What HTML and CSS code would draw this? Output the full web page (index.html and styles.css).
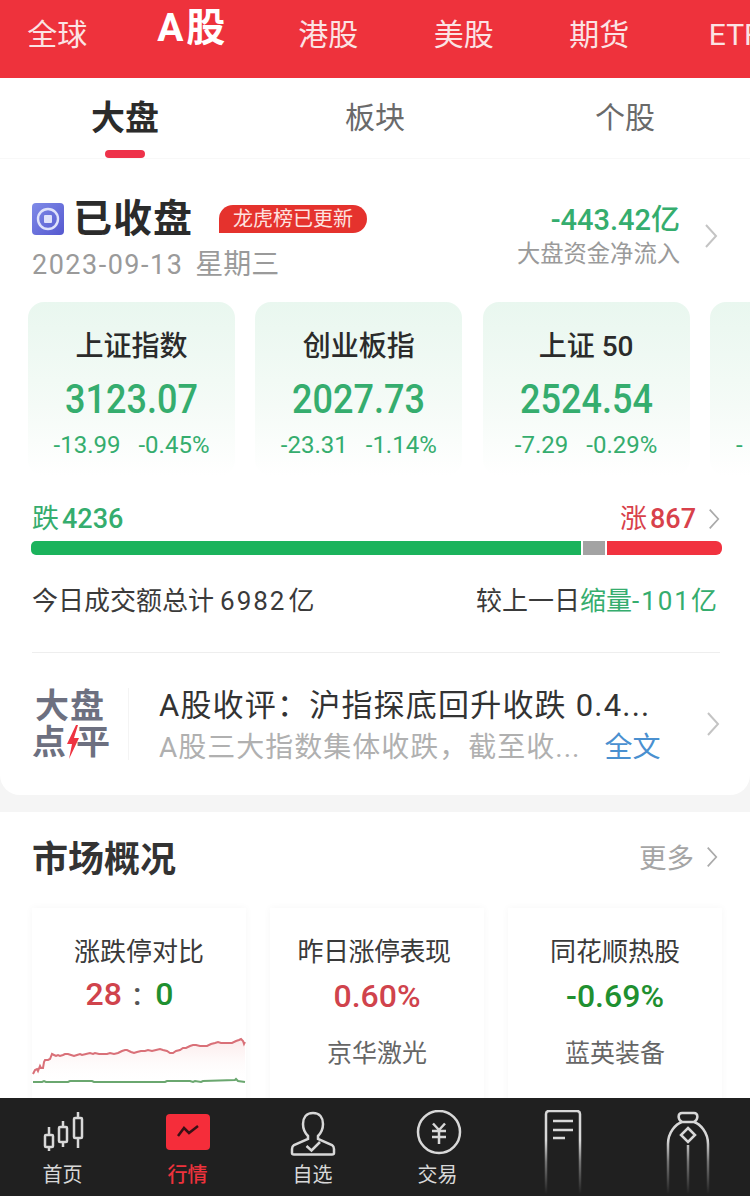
FILE: index.html
```
<!DOCTYPE html>
<html lang="zh-CN">

<head>
    <meta charset="UTF-8">
    <meta name="viewport" content="width=device-width, initial-scale=1.0">
    <title>行情</title>
    <link rel="stylesheet" href="styles.css">
</head>

<body>
    <div class="page">
        <!-- market switch -->
        <div class="market-nav">
            <div class="market-item">全球</div>
            <div class="market-item active">A股</div>
            <div class="market-item">港股</div>
            <div class="market-item">美股</div>
            <div class="market-item">期货</div>
            <div class="market-item">ETF</div>
        </div>

        <div class="content">
            <div class="sub-tabs">
                <div class="sub-tab active">大盘</div>
                <div class="sub-tab">板块</div>
                <div class="sub-tab">个股</div>
            </div>

            <div class="panel">
                <div class="status">
                    <div class="status-left">
                        <div class="status-line">
                            <svg class="status-icon" viewBox="0 0 32 32">
                                <defs>
                                    <linearGradient id="statusBg" x1="0" y1="0" x2="1" y2="1">
                                        <stop offset="0" stop-color="#7f8be8" />
                                        <stop offset="1" stop-color="#5558cf" />
                                    </linearGradient>
                                </defs>
                                <rect width="32" height="32" rx="4" fill="url(#statusBg)" />
                                <circle cx="16" cy="16" r="10" fill="none" stroke="#dfe2fb" stroke-width="2.4" />
                                <rect x="12" y="12" width="8" height="8" rx="1" fill="#dfe2fb" />
                            </svg>
                            <span class="status-title">已收盘</span>
                            <span class="status-badge">龙虎榜已更新</span>
                        </div>
                        <div class="status-date"><span class="date-num">2023-09-13</span><span>星期三</span></div>
                    </div>
                    <div class="flow">
                        <div class="flow-value">-443.42亿</div>
                        <div class="flow-label">大盘资金净流入</div>
                    </div>
                    <svg class="chevron" viewBox="0 0 14 24"><path d="M2 1 L12 12 L2 23" /></svg>
                </div>

                <div class="index-row">
                    <div class="index-card">
                        <div class="index-name">上证指数</div>
                        <div class="index-value">3123.07</div>
                        <div class="index-delta"><span>-13.99</span><span>-0.45%</span></div>
                    </div>
                    <div class="index-card">
                        <div class="index-name">创业板指</div>
                        <div class="index-value">2027.73</div>
                        <div class="index-delta"><span>-23.31</span><span>-1.14%</span></div>
                    </div>
                    <div class="index-card">
                        <div class="index-name">上证 50</div>
                        <div class="index-value">2524.54</div>
                        <div class="index-delta"><span>-7.29</span><span>-0.29%</span></div>
                    </div>
                    <div class="index-card cut">
                        <div class="index-name"></div>
                        <div class="index-value"></div>
                        <div class="index-delta"><span>-</span></div>
                    </div>
                </div>

                <div class="breadth">
                    <div class="breadth-fall">跌<b>4236</b></div>
                    <div class="breadth-rise">涨<b>867</b></div>
                    <svg class="chevron small" viewBox="0 0 14 24"><path d="M2 1 L12 12 L2 23" /></svg>
                </div>
                <div class="bar">
                    <div class="bar-fall"></div>
                    <div class="bar-flat"></div>
                    <div class="bar-rise"></div>
                </div>

                <div class="turnover">
                    <div>今日成交额总计<span class="num">6982</span>亿</div>
                    <div>较上一日<span class="green">缩量<span class="num-tight">-101</span>亿</span></div>
                </div>

                <div class="article">
                    <div class="logo">
                        <div class="logo-line top">大盘</div>
                        <div class="logo-line">点<svg class="bolt" viewBox="0 0 14 34"><path d="M10 0 L1 19 H6 L3 34 L13 13 H8 L12 0 Z" /></svg>平</div>
                    </div>
                    <div class="article-text">
                        <div class="article-title">A股收评：沪指探底回升收跌 0.4...</div>
                        <div class="article-sub"><span class="sub-text">A股三大指数集体收跌，截至收...</span><span class="more-link">全文</span></div>
                    </div>
                    <svg class="chevron" viewBox="0 0 14 24"><path d="M2 1 L12 12 L2 23" /></svg>
                </div>
            </div>

            <div class="overview">
                <div class="overview-head">
                    <div class="overview-title">市场概况</div>
                    <div class="overview-more">更多</div>
                    <svg class="chevron small" viewBox="0 0 14 24"><path d="M2 1 L12 12 L2 23" /></svg>
                </div>
                <div class="overview-cards">
                    <div class="ov-card">
                        <div class="ov-name">涨跌停对比</div>
                        <div class="ov-value ratio"><span class="red">28</span><span class="colon">:</span><span class="dgreen">0</span></div>
                        <svg class="spark" viewBox="32 1030 214 60" preserveAspectRatio="none">
                            <defs>
                                <linearGradient id="sparkFill" x1="0" y1="0" x2="0" y2="1">
                                    <stop offset="0" stop-color="#f6c9c9" stop-opacity="0.4" />
                                    <stop offset="1" stop-color="#fff" stop-opacity="0" />
                                </linearGradient>
                            </defs>
                            <path fill="url(#sparkFill)" d="M33 1073 L37 1068 L40 1065 L43 1067 L45 1059 L50 1058 L53 1053 L60 1055 L68 1053 L82 1054 L95 1052 L107 1053 L118 1052 L127 1049 L137 1051 L148 1049 L162 1048 L173 1052 L185 1047 L195 1044 L207 1045 L220 1041 L232 1042 L241 1038 L245 1041 L245 1082 L33 1082 Z" />
                            <polyline class="spark-red" points="33,1073 35,1069 37,1068 38,1070 40,1065 41,1067 43,1067 44,1061 45,1059 48,1059 50,1058 52,1053 54,1054 56,1055 58,1054 60,1055 63,1054 65,1053 68,1053 71,1054 74,1055 77,1054 80,1053 82,1054 86,1053 90,1052 93,1053 95,1052 99,1053 103,1053 107,1053 110,1052 114,1053 118,1052 122,1050 125,1049 127,1049 131,1051 134,1052 137,1051 141,1050 145,1050 148,1049 152,1050 156,1049 160,1048 163,1049 167,1050 170,1052 173,1052 176,1050 180,1049 183,1047 186,1047 190,1045 193,1044 196,1044 200,1045 204,1045 207,1045 211,1043 215,1042 218,1041 221,1042 225,1042 229,1042 232,1042 236,1040 239,1039 241,1038 243,1040 244,1043 245,1041" />
                            <polyline class="spark-green" points="33,1081 42,1081 44,1080 46,1081 68,1081 70,1080 92,1080 94,1081 165,1081 167,1080 190,1080 193,1081 195,1080 201,1081 203,1080 235,1079 236,1078 238,1080 245,1081" />
                        </svg>
                    </div>
                    <div class="ov-card">
                        <div class="ov-name">昨日涨停表现</div>
                        <div class="ov-value red">0.60%</div>
                        <div class="ov-stock">京华激光</div>
                    </div>
                    <div class="ov-card">
                        <div class="ov-name">同花顺热股</div>
                        <div class="ov-value dgreen">-0.69%</div>
                        <div class="ov-stock">蓝英装备</div>
                    </div>
                </div>
            </div>
        </div>

        <!-- bottom tabs -->
        <div class="tabbar">
            <div class="tab">
                <svg class="tab-icon" viewBox="0 0 60 50">
                    <path d="M16 17 V41 M30 11 V37 M45 2 V38" />
                    <rect x="12" y="25" width="8" height="12" rx="1" fill="#202020" />
                    <rect x="26" y="17" width="8" height="15" rx="1" fill="#202020" />
                    <rect x="41" y="8" width="8" height="20" rx="1" fill="#202020" />
                </svg>
                <div class="tab-label">首页</div>
            </div>
            <div class="tab active">
                <svg class="tab-icon" viewBox="0 0 60 50">
                    <rect class="tile" x="8" y="4" width="44" height="36" rx="4" />
                    <path class="tile-line" d="M20 26 L26 18 L31 23 L40 16" />
                </svg>
                <div class="tab-label">行情</div>
            </div>
            <div class="tab">
                <svg class="tab-icon" viewBox="0 0 60 50">
                    <path d="M30 3 C23 3 20 8 20 14 C20 20 23 24 25 26 L25 29 L11 35 C9.500 36 9 37 9 39 V43 C9 44 9.500 44.500 11 44.500 H49 C50.500 44.500 51 44 51 43 V39 C51 37 50.500 36 49 35 L35 29 L35 26 C37 24 40 20 40 14 C40 8 37 3 30 3 Z" />
                    <path d="M23.500 36 L28.500 40.500 L37 32" />
                </svg>
                <div class="tab-label">自选</div>
            </div>
            <div class="tab">
                <svg class="tab-icon" viewBox="0 0 60 50">
                    <circle cx="31" cy="22" r="21" />
                    <path d="M25 13.500 L31 20 L37 13.500 M24 21 H38 M24 27 H38 M31 20 V34" />
                </svg>
                <div class="tab-label">交易</div>
            </div>
            <div class="tab">
                <svg class="tab-icon tall" viewBox="0 0 60 86">
                    <defs>
                        <linearGradient id="fadeA" gradientUnits="userSpaceOnUse" x1="0" y1="30" x2="0" y2="84">
                            <stop offset="0" stop-color="#d8d8d8" />
                            <stop offset="0.4" stop-color="#d8d8d8" stop-opacity="0.45" />
                            <stop offset="1" stop-color="#d8d8d8" stop-opacity="0" />
                        </linearGradient>
                    </defs>
                    <path class="fade" d="M13 84 V4 C13 2 14 1 16 1 H44 C46 1 47 2 47 4 V84" />
                    <path d="M20 11 H40 M20 20 H40 M20 28 H32" />
                </svg>
            </div>
            <div class="tab">
                <svg class="tab-icon tall" viewBox="0 0 60 86">
                    <path class="fade" d="M10 84 V34 C10 22 18 14 24 12 H36 C42 14 50 22 50 34 V84" />
                    <path class="fade" d="M30 35 V84" />
                    <path d="M24 12 C19 9 20 3 24 3 H36 C40 3 41 9 36 12" />
                    <path d="M30 18 L37 25 L30 32 L23 25 Z" />
                </svg>
            </div>
        </div>
    </div>
</body>

</html>
```

FILE: styles.css
```
* {
    margin: 0;
    padding: 0;
    box-sizing: border-box;
}

body {
    font-family: Roboto, 'Noto Sans CJK SC', sans-serif;
    color: #2b2b2b;
    background: #fff;
}

.page {
    display: flex;
    flex-direction: column;
    height: 100vh;
    overflow: hidden;
}

.red {
    color: #d0434c;
}

.green {
    color: #35ad6e;
}

.dgreen {
    color: #1f9030;
}

.market-nav {
    display: flex;
    flex: none;
    height: 78px;
    margin-left: -10.5px;
    background: #ee323c;
    overflow: hidden;
}

.market-item {
    flex: 0 0 135.5px;
    padding-top: 13px;
    font-size: 30px;
    line-height: 44px;
    text-align: center;
    white-space: nowrap;
    color: #fbe3e4;
}

.market-item.active {
    padding-top: 5px;
    font-size: 39px;
    line-height: 46px;
    font-weight: 700;
    letter-spacing: 3px;
    color: #fff;
}

.content {
    flex: 1;
    min-height: 0;
    overflow: hidden;
    background: #f5f5f5;
}

.sub-tabs {
    display: flex;
    height: 81px;
    background: #fff;
    border-bottom: 1px solid #f8f8f8;
}

.sub-tab {
    position: relative;
    flex: 1;
    padding-top: 17px;
    font-size: 30px;
    line-height: 46px;
    text-align: center;
    color: #6a6a6a;
}

.sub-tab.active {
    font-size: 34px;
    font-weight: 700;
    color: #2b2b2b;
}

.sub-tab.active::after {
    content: '';
    position: absolute;
    left: 105px;
    bottom: 0;
    width: 40px;
    height: 8px;
    border-radius: 4px;
    background: #ee324a;
}

.panel {
    height: 636px;
    padding: 37px 0 0;
    background: #fff;
    border-radius: 0 0 20px 20px;
    overflow: hidden;
}

.status {
    display: flex;
    align-items: flex-start;
    height: 92px;
    padding: 0 32px;
}

.status-left {
    flex: 1;
}

.status-line {
    display: flex;
    align-items: center;
    height: 46px;
}

.status-icon {
    flex: none;
    width: 32px;
    height: 32px;
}

.status-title {
    margin-left: 9px;
    font-size: 39px;
    line-height: 46px;
    font-weight: 700;
    letter-spacing: 1px;
}

.status-badge {
    height: 28px;
    margin-left: 26px;
    padding: 0 14px;
    border-radius: 14px 14px 14px 0;
    font-size: 20px;
    line-height: 28px;
    color: #fde3e0;
    background: #e5322d;
}

.status-date {
    display: flex;
    gap: 12px;
    font-size: 28px;
    line-height: 46px;
    color: #9a9a9a;
}

.date-num {
    font-size: 27px;
    letter-spacing: 1.5px;
}

.flow {
    margin-top: 7px;
    margin-right: 24px;
    text-align: right;
}

.flow-value {
    font-size: 29px;
    line-height: 34px;
    font-weight: 500;
    color: #35ad6e;
}

.flow-label {
    font-size: 23.3px;
    line-height: 34px;
    color: #9a9a9a;
}

.chevron {
    flex: none;
    width: 14px;
    height: 24px;
    fill: none;
    stroke: #c4c4c4;
    stroke-width: 2;
}

.status .chevron {
    margin-top: 28px;
}

.chevron.small {
    width: 12px;
    height: 22px;
    margin-left: 12px;
    stroke: #aaa;
}

.index-row {
    display: flex;
    gap: 20.3px;
    margin-top: 14px;
    padding-left: 28px;
    overflow: hidden;
}

.index-card {
    flex: 0 0 207px;
    height: 174px;
    padding-top: 23px;
    border-radius: 16px;
    text-align: center;
    background: linear-gradient(#e9f7ef, #f5fbf7 60%, #fff);
}

.index-name {
    height: 44px;
    font-size: 28px;
    line-height: 44px;
    font-weight: 500;
}

.index-value {
    height: 48px;
    margin-top: 7px;
    font-size: 40px;
    line-height: 48px;
    font-weight: 500;
    color: #35ad6e;
    transform: scaleX(0.9);
}

.index-delta {
    display: flex;
    justify-content: center;
    gap: 18px;
    margin-top: 4px;
    font-size: 24px;
    line-height: 34px;
    color: #35ad6e;
}

.cut .index-delta {
    justify-content: flex-start;
    padding-left: 26px;
}

.breadth {
    display: flex;
    align-items: center;
    margin-top: 24px;
    padding: 0 30px 0 32px;
    font-size: 27px;
    line-height: 38px;
}

.breadth b {
    margin-left: 3px;
    font-weight: 500;
}

.breadth-fall {
    flex: 1;
    color: #35ad6e;
}

.breadth-rise {
    color: #d8414b;
}

.bar {
    display: flex;
    gap: 2px;
    height: 14px;
    margin: 3px 28px 0 31px;
}

.bar-fall {
    width: 550px;
    border-radius: 5px 0 0 5px;
    background: #1bb35c;
}

.bar-flat {
    width: 22px;
    background: #a3a3a3;
}

.bar-rise {
    flex: 1;
    border-radius: 0 6px 6px 0;
    background: #f1323f;
}

.turnover {
    display: flex;
    justify-content: space-between;
    margin-top: 26px;
    padding: 0 33px 0 32px;
    font-size: 26px;
    line-height: 40px;
    color: #3a3a3a;
}

.num {
    margin: 0 2px 0 6px;
    letter-spacing: 2px;
}

.num-tight {
    letter-spacing: 2px;
}

.article {
    display: flex;
    align-items: center;
    height: 143px;
    margin: 31px 30px 0 32px;
    border-top: 1px solid #eee;
}

.logo {
    flex: none;
    width: 97px;
    padding-right: 21px;
    margin-right: 30px;
    border-right: 1px solid #f4f4f4;
    font-size: 34px;
    line-height: 36px;
    font-weight: 700;
    color: #6d7080;
}

.logo-line {
    display: flex;
    align-items: center;
    white-space: nowrap;
    letter-spacing: 1px;
}

.logo-line.top {
    padding-left: 3px;
}

.bolt {
    flex: none;
    width: 14px;
    height: 34px;
    margin: 0 -4px 0 -1px;
    fill: #ee3340;
}

.article-text {
    flex: 1;
    min-width: 0;
    padding-top: 5px;
}

.article-title {
    font-size: 31px;
    line-height: 42px;
    letter-spacing: 1.2px;
    white-space: nowrap;
    color: #333;
}

.article-sub {
    display: flex;
    gap: 24px;
    font-size: 28px;
    line-height: 42px;
    white-space: nowrap;
    color: #b0b0b0;
}

.sub-text {
    letter-spacing: 1px;
}

.more-link {
    color: #4a90d0;
}

.overview {
    margin-top: 17px;
    height: 300px;
    padding: 0 32px;
    background: #fff;
}

.overview-head {
    display: flex;
    align-items: center;
    height: 96px;
}

.overview-title {
    flex: 1;
    font-size: 36px;
    font-weight: 700;
    line-height: 50px;
    color: #333;
}

.overview-more {
    margin-bottom: 8px;
    font-size: 27.5px;
    color: #a5a5a5;
}

.overview-head .chevron {
    margin-bottom: 6px;
}

.overview-cards {
    display: flex;
    gap: 24px;
}

.ov-card {
    flex: 0 0 214px;
    height: 220px;
    padding-top: 22px;
    text-align: center;
    background: #fff;
    box-shadow: 0 0 8px rgba(0, 0, 0, 0.04);
}

.ov-name {
    font-size: 26px;
    line-height: 44px;
    color: #3a3a3a;
}

.ov-card:nth-child(2) .ov-name {
    padding-right: 6px;
    letter-spacing: -0.5px;
}

.ov-value {
    margin-top: 2px;
    font-size: 32px;
    line-height: 40px;
    font-weight: 500;
}

.ratio {
    display: flex;
    justify-content: center;
    gap: 14px;
    margin-top: 0;
    padding-right: 19px;
}

.colon {
    margin-left: -3px;
    color: #555;
}

.ov-stock {
    margin-top: 19px;
    font-size: 25px;
    line-height: 38px;
    color: #666;
}

.spark {
    display: block;
    width: 214px;
    height: 60px;
    margin-top: 17px;
}

.spark-red {
    fill: none;
    stroke: #d97078;
    stroke-width: 2;
}

.spark-green {
    fill: none;
    stroke: #6aa76f;
    stroke-width: 2;
}

.tabbar {
    display: grid;
    flex: none;
    grid-template-columns: repeat(6, 125px);
    height: 98px;
    background: #202020;
}

.tab {
    display: flex;
    flex-direction: column;
    align-items: center;
    padding-top: 12px;
    color: #d8d8d8;
}

.tab-icon {
    width: 60px;
    height: 50px;
    fill: none;
    stroke: #d8d8d8;
    stroke-width: 2.5;
}

.tab-icon.tall {
    height: 86px;
}

.fade {
    stroke: url(#fadeA);
}

.tile {
    fill: #f52d3a;
    stroke: none;
}

.tile-line {
    stroke: #3a1015;
}

.tab-label {
    font-size: 20px;
    line-height: 30px;
}

.tab.active .tab-label {
    font-weight: 500;
    color: #ee323c;
}
```
